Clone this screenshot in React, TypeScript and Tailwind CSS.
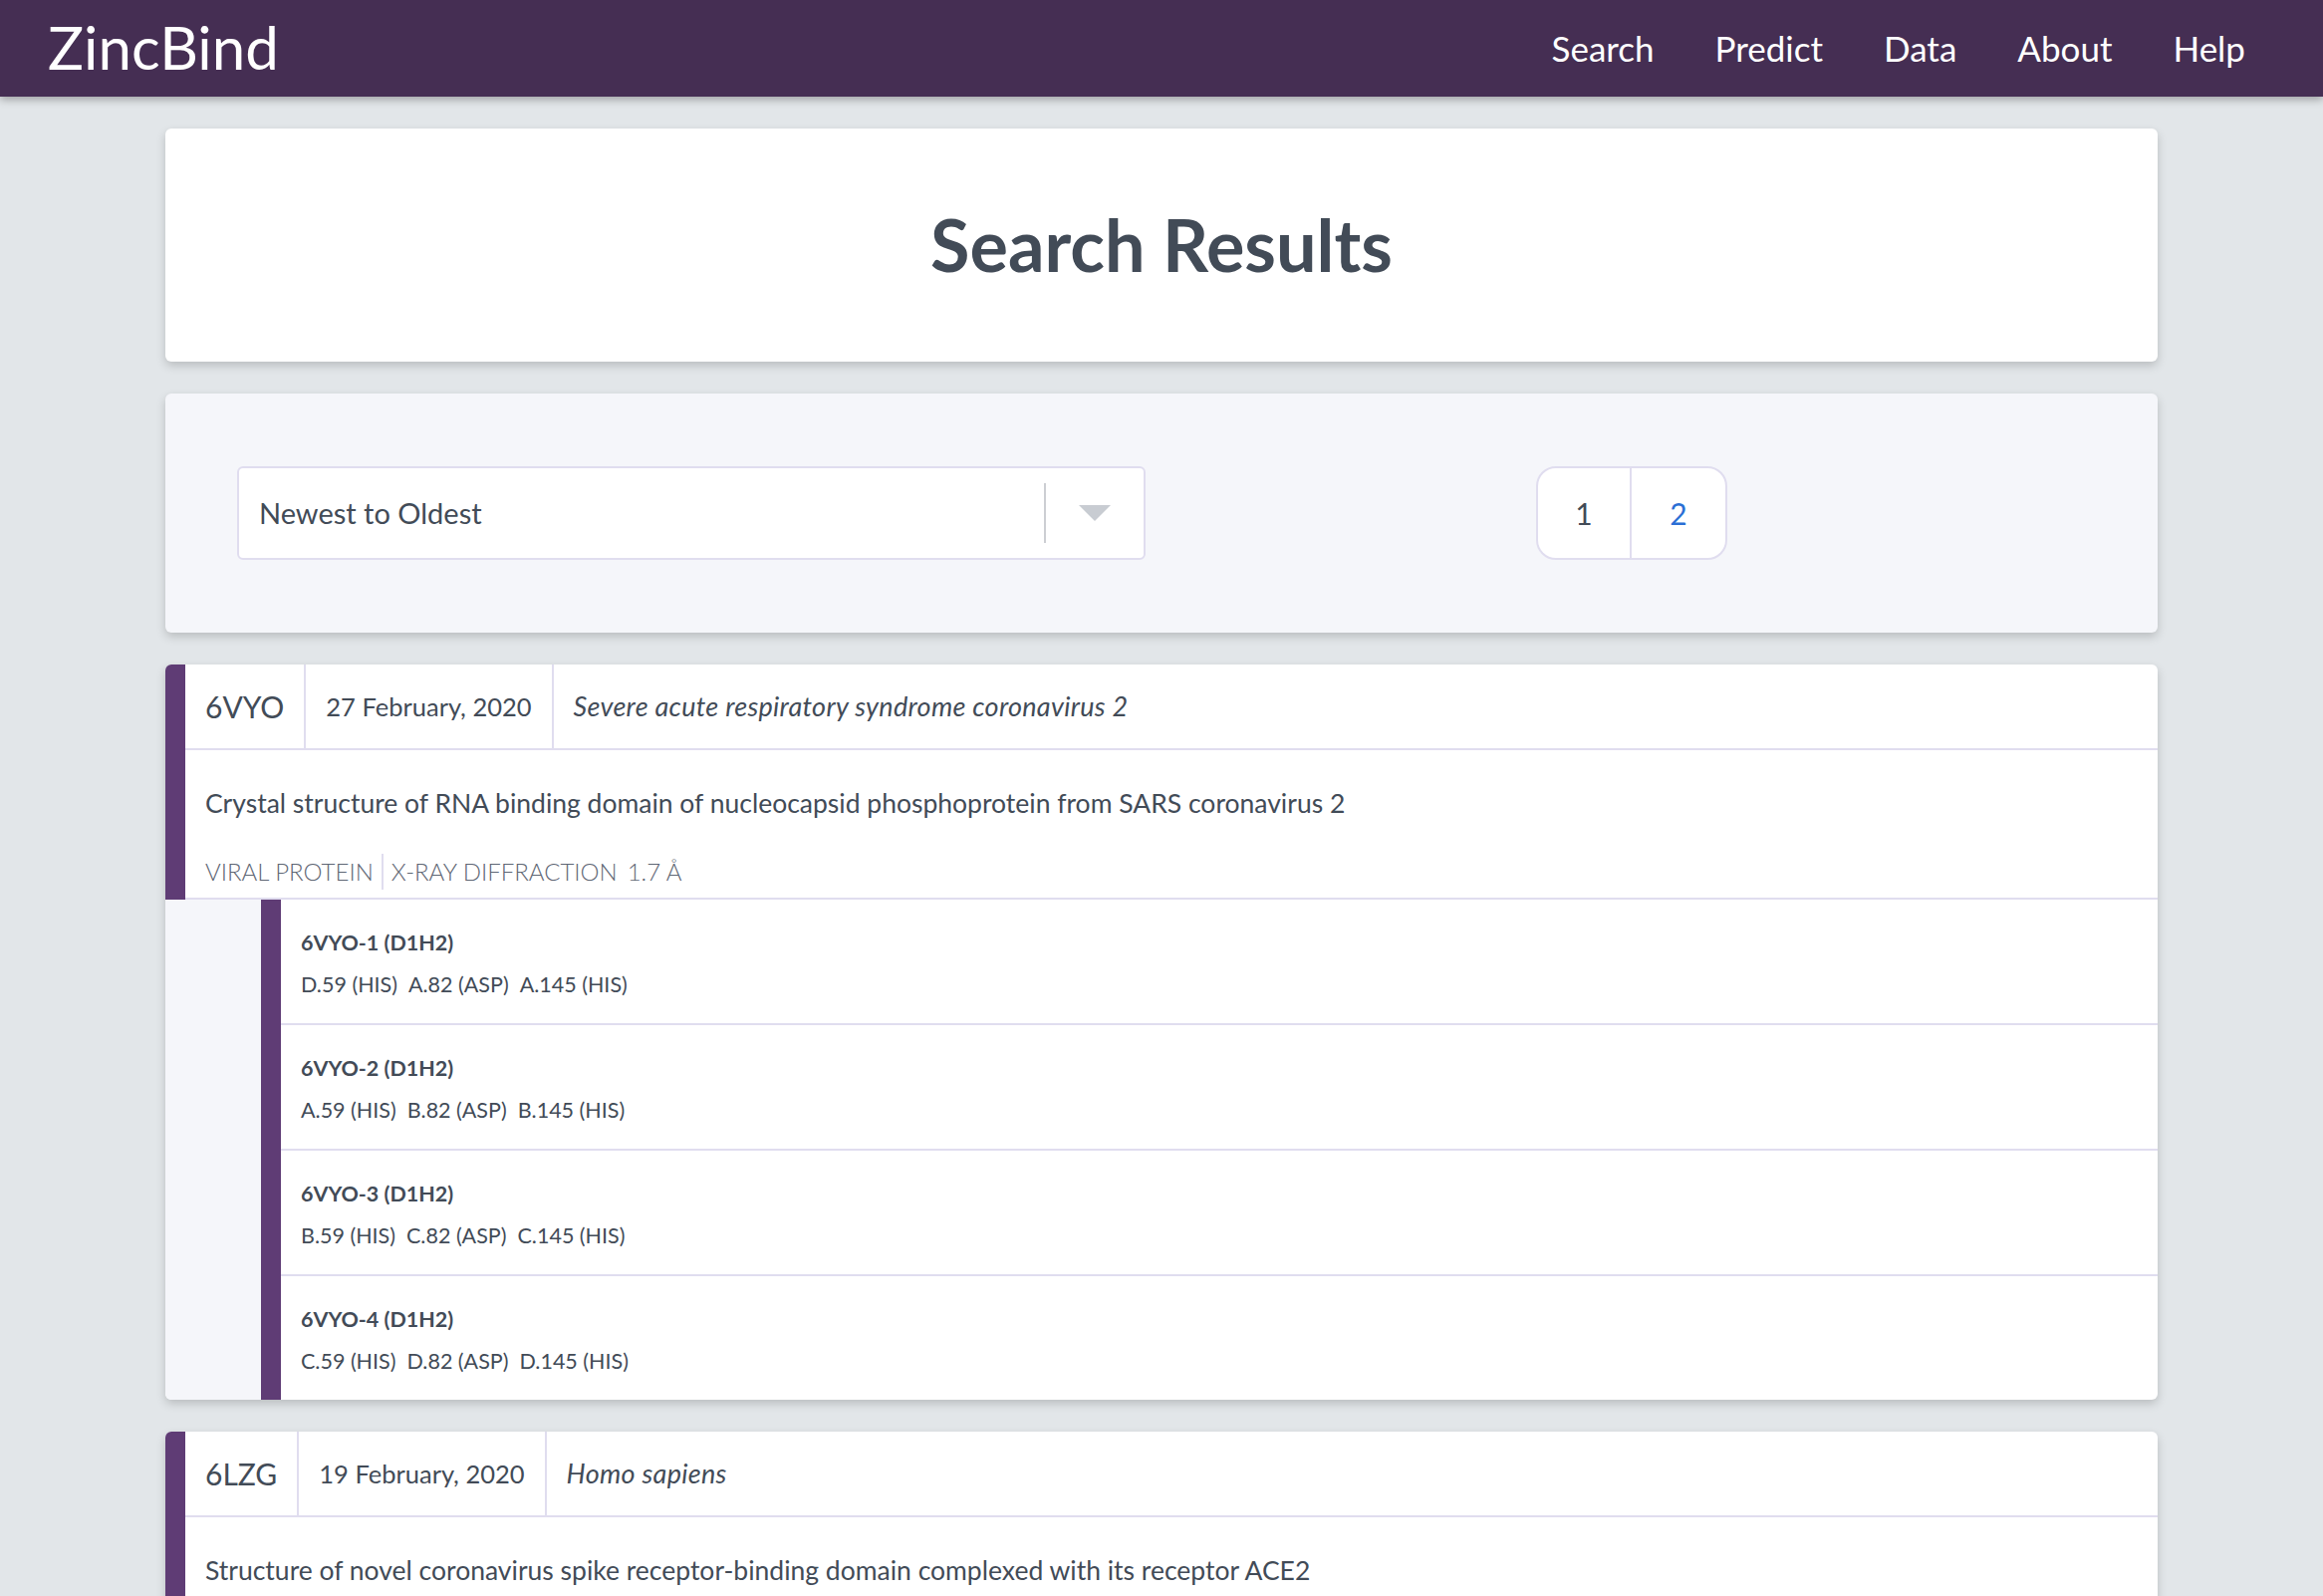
const navLinks = ["Search", "Predict", "Data", "About", "Help"];

type Site = { name: string; residues: string[] };

type Result = {
  id: string;
  date: string;
  species: string;
  title: string;
  classification?: string;
  technique?: string;
  resolution?: string;
  sites: Site[];
};

const results: Result[] = [
  {
    id: "6VYO",
    date: "27 February, 2020",
    species: "Severe acute respiratory syndrome coronavirus 2",
    title: "Crystal structure of RNA binding domain of nucleocapsid phosphoprotein from SARS coronavirus 2",
    classification: "VIRAL PROTEIN",
    technique: "X-RAY DIFFRACTION",
    resolution: "1.7 Å",
    sites: [
      { name: "6VYO-1 (D1H2)", residues: ["D.59 (HIS)", "A.82 (ASP)", "A.145 (HIS)"] },
      { name: "6VYO-2 (D1H2)", residues: ["A.59 (HIS)", "B.82 (ASP)", "B.145 (HIS)"] },
      { name: "6VYO-3 (D1H2)", residues: ["B.59 (HIS)", "C.82 (ASP)", "C.145 (HIS)"] },
      { name: "6VYO-4 (D1H2)", residues: ["C.59 (HIS)", "D.82 (ASP)", "D.145 (HIS)"] },
    ],
  },
  {
    id: "6LZG",
    date: "19 February, 2020",
    species: "Homo sapiens",
    title: "Structure of novel coronavirus spike receptor-binding domain complexed with its receptor ACE2",
    classification: "VIRAL PROTEIN/HYDROLASE",
    technique: "X-RAY DIFFRACTION",
    resolution: "2.5 Å",
    sites: [],
  },
];

function ResultCard({ result }: { result: Result }) {
  return (
    <div className="bg-white rounded-[6px] shadow-[0_4px_10px_rgba(0,0,0,0.18)] overflow-hidden">
      <div className="border-l-[20px] border-[#5f3c75]">
        {/* header cells */}
        <div className="flex h-[86px] border-b-2 border-[#e0ddef]">
          <div className="flex items-center px-[20px] border-r-2 border-[#e0ddef] text-[30px]">{result.id}</div>
          <div className="flex items-center px-[20px] border-r-2 border-[#e0ddef] text-[25.5px]">{result.date}</div>
          <div className="flex items-center px-[20px] text-[27px] tracking-[0.3px] italic">{result.species}</div>
        </div>
        <div className="px-[20px] pt-[35px] pb-[8px] border-b-2 border-[#e0ddef]">
          <div className="text-[26.5px] leading-[36px]">{result.title}</div>
          <div className="flex items-center mt-[33px] text-[24px] leading-[36px] font-light text-[#5f6775]">
            <span className="pr-[8px] border-r-2 border-[#e0ddef]">{result.classification}</span>
            <span className="pl-[8px]">{result.technique}</span>
            <span className="pl-[10px]">{result.resolution}</span>
          </div>
        </div>
      </div>
      {result.sites.length > 0 && (
        <div className="flex">
          <div className="w-[96px] bg-[#f5f6fa]" />
          <div className="flex-1 border-l-[20px] border-[#5f3c75]">
            {result.sites.map((site, i) => (
              <div
                key={site.name}
                className={`px-[20px] pt-[28px] pb-[24px] ${i < result.sites.length - 1 ? "border-b-2 border-[#e0ddef]" : ""}`}
              >
                <div className="text-[21.5px] leading-[30px] font-bold">{site.name}</div>
                <div className="mt-[12px] text-[21.5px] leading-[30px] flex gap-[11px]">
                  {site.residues.map((r) => (
                    <span key={r}>{r}</span>
                  ))}
                </div>
              </div>
            ))}
          </div>
        </div>
      )}
    </div>
  );
}

export default function App() {
  return (
    <div className="min-h-screen bg-[#e2e6e9] text-[#424b57] font-['Lato',sans-serif] pb-[40px]">
      <nav className="h-[97px] bg-[#452e53] shadow-[0_3px_8px_rgba(0,0,0,0.3)] flex items-center justify-between pl-[48px] pr-[78px] relative z-10">
        <div className="text-white text-[60px] leading-none pb-[4px]">ZincBind</div>
        <div className="flex gap-[61px] text-white text-[35px] leading-none">
          {navLinks.map((l) => (
            <a key={l} href="#">
              {l}
            </a>
          ))}
        </div>
      </nav>

      <main className="w-[2000px] mx-auto pt-[32px] flex flex-col gap-[32px]">
        <div className="h-[234px] bg-white rounded-[6px] shadow-[0_4px_10px_rgba(0,0,0,0.18)] flex items-center justify-center">
          <h1 className="text-[72px] font-bold leading-none pb-[2px]">Search Results</h1>
        </div>

        <div className="bg-[#f5f6fa] rounded-[6px] shadow-[0_4px_10px_rgba(0,0,0,0.18)] px-[72px] pt-[73px] pb-[73px] grid grid-cols-2 gap-[32px]">
          <div className="h-[94px] bg-white border-2 border-[#e0ddef] rounded-[6px] flex items-center">
            <span className="flex-1 pl-[20px] text-[29px]">Newest to Oldest</span>
            <span className="w-[2px] h-[60px] bg-[#ccced3]" />
            <span className="w-[98px] flex items-center justify-center">
              <svg width="32" height="16" viewBox="0 0 32 16">
                <polygon points="0,0 32,0 16,16" fill="#c8ccd2" />
              </svg>
            </span>
          </div>
          <div className="flex items-center justify-center">
            <div className="flex h-[94px] border-2 border-[#e0ddef] rounded-[20px] overflow-hidden bg-white text-[30px]">
              <button className="w-[94px] flex items-center justify-center border-r-2 border-[#e0ddef]">1</button>
              <button className="w-[94px] flex items-center justify-center text-[#2b6fd5]">2</button>
            </div>
          </div>
        </div>

        {results.map((r) => (
          <ResultCard key={r.id} result={r} />
        ))}
      </main>
    </div>
  );
}
